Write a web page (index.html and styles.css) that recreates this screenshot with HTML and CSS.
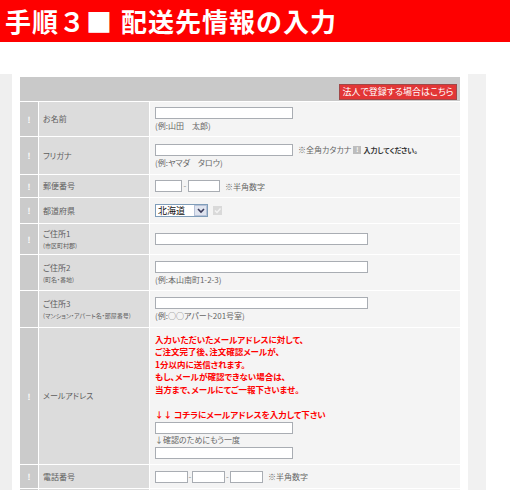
FILE: index.html
```html
<!DOCTYPE html>
<html lang="ja">
<head>
<meta charset="utf-8">
<title>配送先情報の入力</title>
<link rel="stylesheet" href="styles.css">
</head>
<body>
<header class="step-bar">
  <h1 class="step-title"><span class="st-num">手順３</span><span class="st-sq">■</span><span class="st-name">配送先情報の入力</span></h1>
</header>
<div class="main">
  <div class="strip strip-left"></div>
  <table class="form">
    <colgroup><col class="c-req"><col class="c-label"><col class="c-field"></colgroup>
    <tr class="r-top"><td colspan="3" class="top"><a class="corp-btn">法人で登録する場合はこちら</a></td></tr>
    <tr class="r-name">
      <td class="req">!</td><td class="label">お名前</td>
      <td class="field"><input class="in w-name" type="text"><div class="hint">(例:山田　太郎)</div></td>
    </tr>
    <tr class="r-kana">
      <td class="req">!</td><td class="label">フリガナ</td>
      <td class="field"><div class="line"><input class="in w-name" type="text"><span class="note">※全角カタカナ</span><span class="ico">!</span><b class="warn">入力してください。</b></div><div class="hint">(例:ヤマダ　タロウ)</div></td>
    </tr>
    <tr class="r-zip">
      <td class="req">!</td><td class="label">郵便番号</td>
      <td class="field"><div class="line"><input class="in w-zip1" type="text"><span class="dash">-</span><input class="in w-zip2" type="text"><span class="note">※半角数字</span></div></td>
    </tr>
    <tr class="r-pref">
      <td class="req">!</td><td class="label">都道府県</td>
      <td class="field"><div class="line"><span class="sel"><span class="sel-val">北海道</span><span class="sel-arr"><svg width="10" height="9" viewBox="0 0 10 9"><path d="M2 3 L5 6 L8 3" fill="none" stroke="#3a3a5a" stroke-width="1.6"/></svg></span></span><svg class="chk" width="9" height="9" viewBox="0 0 9 9"><rect x="0" y="0" width="9" height="9" fill="#d9d9d9"/><path d="M2 4.5 L4 6.5 L7.5 2.5" fill="none" stroke="#f4f4f4" stroke-width="1.4"/></svg></div></td>
    </tr>
    <tr class="r-addr1">
      <td class="req">!</td><td class="label">ご住所1<div class="sub">(市区町村郡)</div></td>
      <td class="field"><input class="in w-addr" type="text"></td>
    </tr>
    <tr class="r-addr2">
      <td class="req"></td><td class="label">ご住所2<div class="sub">(町名・番地)</div></td>
      <td class="field"><input class="in w-addr" type="text"><div class="hint">(例:本山南町1-2-3)</div></td>
    </tr>
    <tr class="r-addr3">
      <td class="req"></td><td class="label">ご住所3<div class="sub">(マンション・アパート名・部屋番号)</div></td>
      <td class="field"><input class="in w-addr" type="text"><div class="hint">(例:○○アパート201号室)</div></td>
    </tr>
    <tr class="r-mail">
      <td class="req">!</td><td class="label">メールアドレス</td>
      <td class="field"><p class="mail-msg">入力いただいたメールアドレスに対して、<br>ご注文完了後、注文確認メールが、<br>1分以内に送信されます。<br>もし、メールが確認できない場合は、<br>当方まで、メールにてご一報下さいませ。<br><br>↓↓ コチラにメールアドレスを入力して下さい</p><input class="in w-name" type="text"><div class="hint hint-mid">↓確認のためにもう一度</div><input class="in w-name" type="text"></td>
    </tr>
    <tr class="r-tel">
      <td class="req">!</td><td class="label">電話番号</td>
      <td class="field"><div class="line"><input class="in w-tel" type="text"><span class="dash dash-s">-</span><input class="in w-tel" type="text"><span class="dash dash-m">-</span><input class="in w-tel" type="text"><span class="note">※半角数字</span></div></td>
    </tr>
    <tr class="r-more">
      <td class="req"></td><td class="label"></td>
      <td class="field"></td>
    </tr>
  </table>
  <div class="strip strip-right"></div>
</div>
</body>
</html>
```
FILE: styles.css
```css
* { box-sizing: border-box; }
html, body { margin: 0; padding: 0; background: #fff; }
body {
  font-family: "Noto Sans CJK JP", "Noto Sans", sans-serif;
  font-feature-settings: "palt";
  color: #5a5a5a;
  overflow: hidden;
}

/* title bar */
.step-bar {
  height: 42px;
  background: #fe0000;
  display: flex;
  align-items: center;
  padding-left: 5px;
}
.step-title {
  margin: 0;
  display: flex;
  font-size: 26px;
  font-weight: 700;
  line-height: 1;
  letter-spacing: 1px;
  color: #fff;
  font-feature-settings: normal;
}
.st-name { margin-left: 8px; }

/* main area */
.main {
  display: flex;
  align-items: stretch;
  margin-top: 32px;
}
.strip {
  flex: none;
  background: #efefef;
}
.strip-left { width: 12px; }
.strip-right { width: 18px; margin-left: 7px; background: #f1f1f1; }

.form {
  flex: none;
  width: 442px;
  margin: 2px 0 0 7px;
  border-collapse: separate;
  border-spacing: 1px;
  table-layout: fixed;
  background: #fff;
  align-self: flex-start;
}
.c-req { width: 18px; }
.c-label { width: 110px; }
.c-field { width: 310px; }

.form td { padding: 0; vertical-align: middle; }
.top { background: #c9c9c9; text-align: right; padding-right: 3px !important; }
.req { background: #cbcbcb; color: #fff; text-align: center; font-size: 8px; font-weight: 700; }
.label { background: #dcdcdc; padding-left: 4px !important; font-size: 8px; color: #5e5e5e; line-height: 12px; }
.field { background: #f4f4f4; padding-left: 5px !important; font-size: 8px; }
.sub { font-size: 6px; line-height: 9px; margin-top: 1px; }

.r-top td { height: 23px; }
.r-name td { height: 34px; }
.r-kana td { height: 37px; }
.r-zip td { height: 22px; }
.r-pref td { height: 25px; }
.r-addr1 td { height: 30px; }
.r-addr2 td { height: 35px; }
.r-addr3 td { height: 36px; }
.r-mail td { height: 136px; }
.r-tel td { height: 23px; }
.r-more td { height: 30px; }

/* corporate button */
.corp-btn {
  display: inline-block;
  width: 118px;
  height: 16px;
  line-height: 14px;
  background: #e23636;
  border: 1px solid #a04848;
  color: #fff;
  font-size: 9px;
  text-align: center;
  vertical-align: middle;
  cursor: pointer;
}

/* inputs */
.in {
  display: block;
  height: 12px;
  margin: 0;
  padding: 0;
  border: 1px solid #a9adb3;
  background: #fff;
  font-size: 8px;
}
.line .in { display: inline-block; }
.w-name { width: 138px; }
.w-addr { width: 213px; }
.w-zip1 { width: 27px; }
.w-zip2 { width: 32px; }
.w-tel { width: 33px; }

.line { display: flex; align-items: center; }
.hint { color: #666; line-height: 10px; margin-top: 2px; }
.hint-mid { margin: 1px 0 2px; }
.note { margin-left: 5px; color: #666; }
.ico {
  width: 8px;
  height: 8px;
  margin-left: 2px;
  background: #bdbdbd;
  color: #fff;
  font-size: 6px;
  line-height: 8px;
  text-align: center;
  font-weight: 700;
}
.warn { margin-left: 2px; font-size: 7px; color: #333; }
.dash { width: 6px; text-align: center; color: #888; font-size: 8px; line-height: 8px; }
.dash-s { width: 4px; }
.dash-m { width: 5px; }

/* select */
.sel {
  display: flex;
  width: 53px;
  height: 13px;
  border: 1px solid #7f9db9;
  background: #fff;
}
.sel-val { flex: 1; font-size: 9px; line-height: 11px; color: #111; padding-left: 2px; }
.sel-arr {
  width: 13px;
  display: flex;
  align-items: center;
  justify-content: center;
  background: #dfe4ef;
  border: 1px solid #b7c2d8;
}
.chk { margin-left: 5px; }

/* mail message */
.mail-msg {
  margin: 0 0 2px;
  color: #f00;
  font-weight: 700;
  font-size: 8.5px;
  line-height: 12.5px;
}
```
